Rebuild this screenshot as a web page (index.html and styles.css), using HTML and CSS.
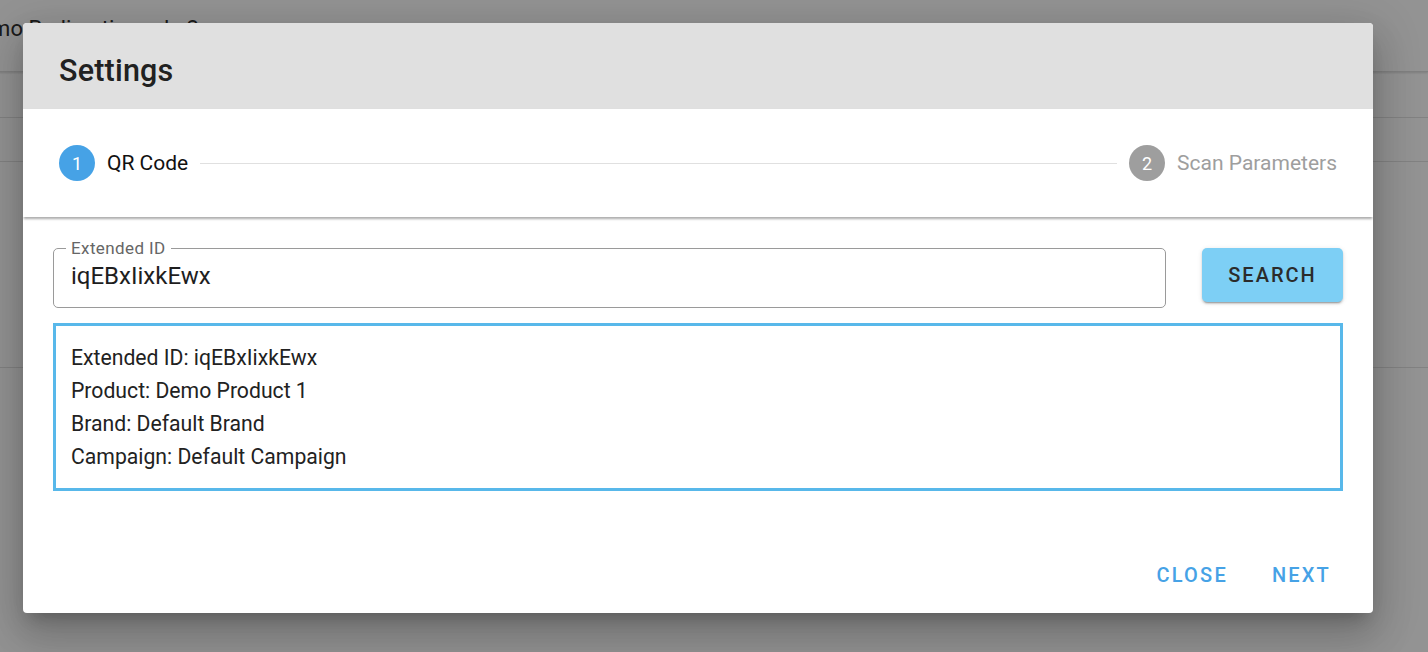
FILE: index.html
```html
<!DOCTYPE html>
<html lang="en">
<head>
<meta charset="utf-8">
<title>Settings</title>
<link rel="stylesheet" href="styles.css">
</head>
<body>
<div class="page">
  <div class="page-title">Demo Redirection rule 2</div>
  <div class="page-row row-a"></div>
  <div class="page-row row-b"></div>
  <div class="page-row row-c"></div>
  <div class="page-row row-d"></div>
</div>
<div class="overlay">
  <div class="dialog">
    <div class="dialog-header">Settings</div>
    <div class="stepper-header">
      <div class="step active">
        <span class="step-num">1</span>
        <span class="step-label">QR Code</span>
      </div>
      <div class="step-divider"></div>
      <div class="step">
        <span class="step-num">2</span>
        <span class="step-label">Scan Parameters</span>
      </div>
    </div>
    <div class="step-content">
      <div class="search-row">
        <fieldset class="field">
          <legend class="field-label">Extended ID</legend>
          <div class="field-value">iqEBxIixkEwx</div>
        </fieldset>
        <button class="search-btn">Search</button>
      </div>
      <div class="info-box">
        <div class="info-line">Extended ID: iqEBxIixkEwx</div>
        <div class="info-line">Product: Demo Product 1</div>
        <div class="info-line">Brand: Default Brand</div>
        <div class="info-line">Campaign: Default Campaign</div>
      </div>
    </div>
    <div class="dialog-actions">
      <button class="text-btn">Close</button>
      <button class="text-btn">Next</button>
    </div>
  </div>
</div>
</body>
</html>
```
FILE: styles.css
```css
html, body {
  margin: 0;
  padding: 0;
  height: 100%;
  overflow: hidden;
  font-family: Roboto, "Liberation Sans", sans-serif;
}
body {
  background: #ffffff;
  position: relative;
}
.page {
  height: 100%;
  display: flex;
  flex-direction: column;
}
.page-title {
  font-size: 22px;
  color: #222;
  margin-left: -35px;
  padding-top: 16px;
  height: 72px;
  box-sizing: border-box;
  border-bottom: 1px solid #ddd;
  box-shadow: 0 1px 2px rgba(0,0,0,0.15);
  white-space: nowrap;
}
.page-row {
  border-bottom: 1px solid #e0e0e0;
}
.row-a { height: 45px; }
.row-b { height: 43px; }
.row-c { height: 205px; }
.row-d { height: 10px; border-bottom: none; }

.overlay {
  position: absolute;
  inset: 0;
  background: rgba(20, 20, 20, 0.46);
  display: flex;
  align-items: flex-start;
  padding: 23px 0 0 23px;
}
.dialog {
  width: 1350px;
  height: 590px;
  background: #fff;
  border-radius: 4px;
  box-shadow: 0 11px 15px -7px rgba(0,0,0,0.2), 0 24px 38px 3px rgba(0,0,0,0.14), 0 9px 46px 8px rgba(0,0,0,0.12);
  display: flex;
  flex-direction: column;
  overflow: hidden;
}
.dialog-header {
  height: 86px;
  flex: none;
  background: #e0e0e0;
  box-sizing: border-box;
  padding: 29px 36px 0;
  font-size: 30.5px;
  font-weight: 500;
  color: #212121;
  line-height: 38px;
  letter-spacing: 0.2px;
}
.stepper-header {
  height: 108px;
  flex: none;
  display: flex;
  align-items: center;
  padding: 0 36px;
  box-shadow: 0 3px 2px -1px rgba(0,0,0,0.25), 0 2px 3px 0 rgba(0,0,0,0.1);
  position: relative;
  z-index: 1;
}
.step {
  display: flex;
  align-items: center;
}
.step-num {
  width: 36px;
  height: 36px;
  border-radius: 50%;
  background: #9e9e9e;
  color: #fff;
  font-size: 18px;
  display: flex;
  align-items: center;
  justify-content: center;
}
.step-label {
  margin-left: 12px;
  font-size: 21px;
  color: #9e9e9e;
}
.step.active .step-num { background: #46a2e6; }
.step.active .step-label { color: #111; }
.step-divider {
  flex: 1;
  height: 1px;
  background: #e0e0e0;
  margin: 0 12px;
}
.step-content {
  height: 318px;
  flex: none;
  box-sizing: border-box;
  padding: 31px 30px 0;
}
.search-row {
  display: flex;
  align-items: flex-start;
  gap: 36px;
}
.field {
  flex: 1;
  margin: -10px 0 0;
  height: 70px;
  box-sizing: border-box;
  border: 1px solid #9a9a9a;
  border-radius: 5px;
  padding: 0 17px;
  min-width: 0;
}
.field-label {
  font-size: 17px;
  letter-spacing: 0.4px;
  color: #666;
  padding: 0 5px;
  margin-left: -5px;
  line-height: 20px;
}
.field-value {
  font-size: 24px;
  color: #1e1e1e;
  line-height: 30px;
  margin-top: 3px;
}
.search-btn {
  width: 141px;
  height: 54px;
  border: none;
  border-radius: 5px;
  background: #7dcff5;
  color: #2b2b2b;
  font-family: Roboto, "Liberation Sans", sans-serif;
  font-size: 20px;
  font-weight: 500;
  letter-spacing: 2px;
  text-transform: uppercase;
  box-shadow: 0 3px 1px -2px rgba(0,0,0,0.2), 0 2px 2px 0 rgba(0,0,0,0.14), 0 1px 5px 0 rgba(0,0,0,0.12);
  padding: 0;
}
.info-box {
  margin-top: 15px;
  height: 168px;
  box-sizing: border-box;
  border: 3px solid #58b8ea;
  padding: 15px 15px 0;
}
.info-line {
  font-size: 21.2px;
  line-height: 33px;
  color: #222;
}
.dialog-actions {
  flex: 1;
  display: flex;
  justify-content: flex-end;
  align-items: center;
  padding: 2px 26px 0 0;
  gap: 12px;
}
.text-btn {
  background: none;
  border: none;
  color: #46a2e6;
  font-family: Roboto, "Liberation Sans", sans-serif;
  font-size: 20px;
  font-weight: 500;
  letter-spacing: 2.2px;
  text-transform: uppercase;
  padding: 10px 16px;
}
```
